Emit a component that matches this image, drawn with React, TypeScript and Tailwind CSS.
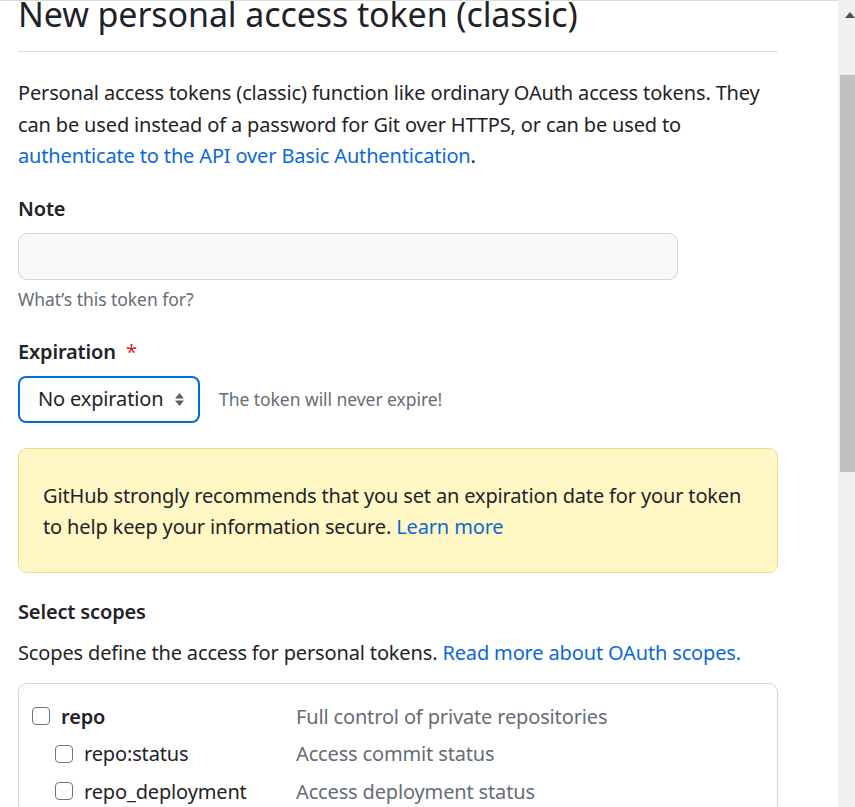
const font = { fontFamily: '"Noto Sans", "Open Sans", sans-serif' };

const Checkbox = () => (
  <span className="inline-block w-[18px] h-[18px] shrink-0 rounded-[4px] border-[1.5px] border-[#6e7781] bg-white" />
);

const scopes = [
  { name: "repo", desc: "Full control of private repositories", child: false },
  { name: "repo:status", desc: "Access commit status", child: true },
  { name: "repo_deployment", desc: "Access deployment status", child: true },
  { name: "public_repo", desc: "Access public repositories", child: true },
];

const SelectArrows = () => (
  <svg width="11" height="15" viewBox="0 0 11 15" className="shrink-0">
    <path d="M5.5 1 L10 6.5 H1 Z" fill="#57606a" />
    <path d="M5.5 14 L10 8.5 H1 Z" fill="#57606a" />
  </svg>
);

export default function App() {
  return (
    <div className="flex h-[807px] w-[855px] overflow-hidden bg-white text-[#1f2328]" style={font}>
      <main className="flex-1 border-t border-[#dcdcdc] pl-[18px] pr-[60px] tracking-[-0.15px]">
        <div className="mt-[-9px] border-b border-[#d8dee4] pb-[14px]">
          <h2 className="text-[34px] leading-[45px] font-normal tracking-[-0.1px]">New personal access token (classic)</h2>
        </div>

        <p className="mt-[25px] text-[20px] leading-[31.5px]">
          Personal access tokens (classic) function like ordinary OAuth access tokens. They
          <br />
          can be used instead of a password for Git over HTTPS, or can be used to
          <br />
          <a className="text-[#0969da]">authenticate to the API over Basic Authentication</a>.
        </p>

        <div className="mt-[21px]">
          <label className="block text-[20px] leading-[31.5px] font-semibold">Note</label>
          <div className="mt-[9px] h-[47px] w-[660px] rounded-[9px] border border-[#d0d7de] bg-[#f6f8fa]" />
          <p className="mt-[6px] text-[17.5px] leading-[27px] tracking-[-0.05px] text-[#656d76]">What’s this token for?</p>
        </div>

        <div className="mt-[23px]">
          <label className="block text-[20px] leading-[31.5px] font-semibold">
            Expiration <span className="ml-[5px] font-normal text-[#cf222e]">*</span>
          </label>
          <div className="mt-[8px] flex items-center gap-[19px]">
            <div className="flex h-[47px] w-[182px] items-center justify-between rounded-[8px] border-2 border-[#0969da] pl-[18px] pr-[13px]">
              <span className="text-[20px] leading-[31.5px]">No expiration</span>
              <SelectArrows />
            </div>
            <span className="text-[17.5px] leading-[27px] tracking-[-0.05px] text-[#656d76]">The token will never expire!</span>
          </div>
        </div>

        <div className="mt-[25px] rounded-[9px] border border-[#eed888] bg-[#fff8c5] px-6 pt-[31px] pb-[29px] text-[20px] leading-[31.5px]">
          GitHub strongly recommends that you set an expiration date for your token
          <br />
          to help keep your information secure. <a className="text-[#0969da]">Learn more</a>
        </div>

        <h3 className="mt-[23px] text-[20px] leading-[31.5px] font-semibold">Select scopes</h3>
        <p className="mt-[10px] text-[20px] leading-[31.5px]">
          Scopes define the access for personal tokens.{" "}
          <a className="text-[#0969da]">Read more about OAuth scopes.</a>
        </p>

        <div className="mt-[14px] rounded-[9px] border border-[#d0d7de] pl-[13px] pt-[17px]">
          {scopes.map((s) => (
            <div key={s.name} className="flex h-[37.5px] items-start text-[20px] leading-[31.5px]">
              <div className={`flex w-[264px] items-center gap-[11px] ${s.child ? "pl-[23px]" : ""}`}>
                <Checkbox />
                <span className={s.child ? "" : "font-semibold"}>{s.name}</span>
              </div>
              <span className="text-[#656d76]">{s.desc}</span>
            </div>
          ))}
        </div>
      </main>

      <aside className="relative w-[17px] shrink-0 bg-[#f0f0f0]">
        <div className="absolute left-[7px] top-[12px] h-0 w-0 border-x-[5px] border-b-[6px] border-x-transparent border-b-[#505050]" />
        <div className="absolute left-[2px] right-0 top-[75px] h-[397px] bg-[#c1c1c1]" />
      </aside>
    </div>
  );
}
